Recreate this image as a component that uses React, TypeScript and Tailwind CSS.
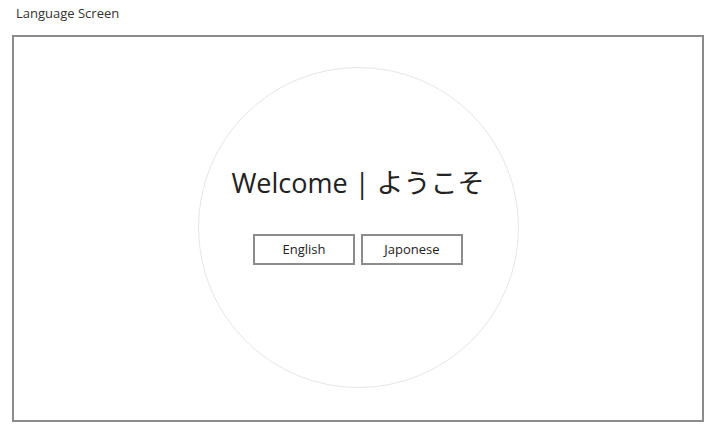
export default function App() {
  const font = { fontFamily: '"Open Sans", "Noto Sans CJK JP", sans-serif' };

  return (
    <div className="w-[717px] h-[431px] bg-white overflow-hidden" style={font}>
      <div className="pl-[16px] pt-[4px] h-[35px] text-[13px] leading-[18px] text-[#333]">
        Language Screen
      </div>
      <div className="ml-[12px] w-[692px] h-[387px] border-2 border-[#8c8c8c] flex items-center justify-center">
        <div className="w-[321px] h-[321px] -mt-[2px] rounded-full border border-[#e6e6e6] flex flex-col items-center pt-[97px]">
          <h1 className="text-[27px] leading-[36px] text-[#222]">
            Welcome | ようこそ
          </h1>
          <div className="mt-[33px] flex gap-[6px]">
            <button className="w-[102px] h-[31px] border-2 border-[#8c8c8c] text-[13px] text-[#222] bg-white">
              English
            </button>
            <button className="w-[102px] h-[31px] border-2 border-[#8c8c8c] text-[13px] text-[#222] bg-white">
              Japonese
            </button>
          </div>
        </div>
      </div>
    </div>
  );
}
